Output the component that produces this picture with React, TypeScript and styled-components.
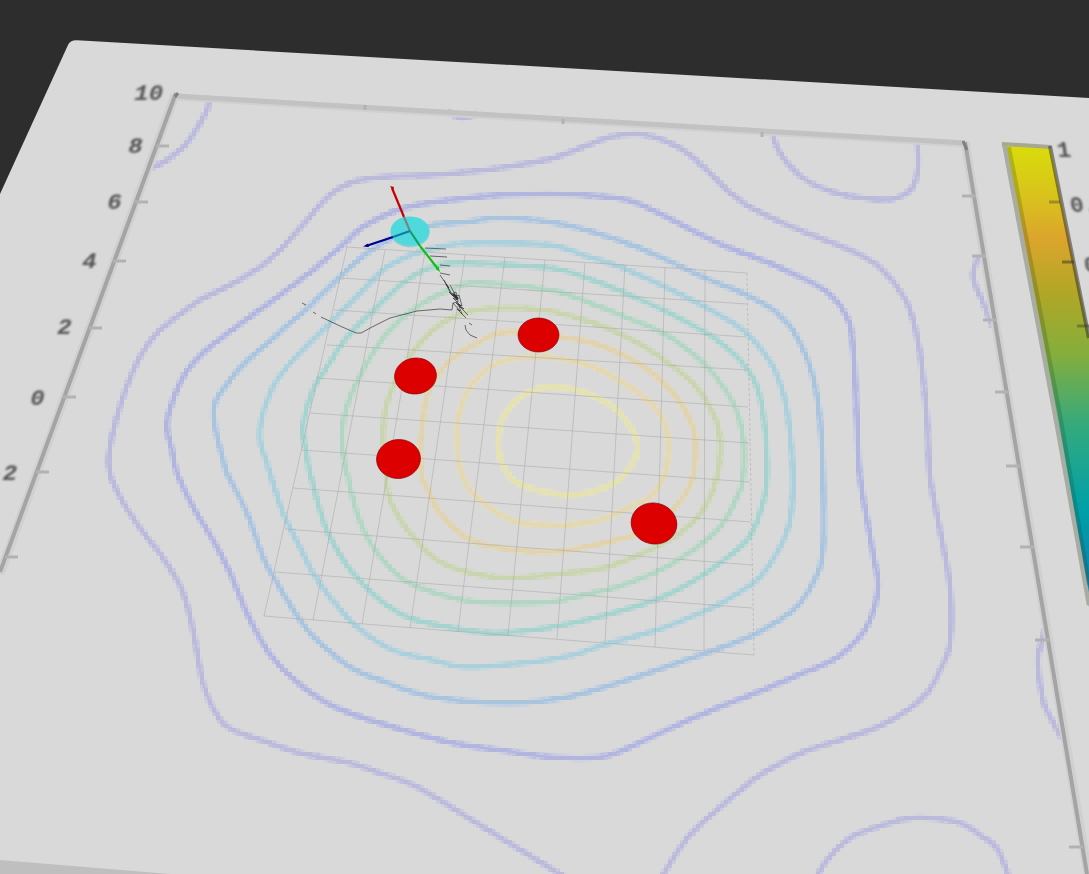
import React from "react";
import styled, { createGlobalStyle } from "styled-components";

type Pt = [number, number];

const GlobalStyle = createGlobalStyle`
  html, body { margin: 0; padding: 0; background: #2d2d2d; }
`;

const Viewport = styled.main`
  width: 1089px;
  height: 874px;
  overflow: hidden;
  background: #2d2d2d;
`;

const SceneSvg = styled.svg`
  display: block;
  width: 1089px;
  height: 874px;
`;

const Plate = styled.path`
  fill: #d9d9d9;
`;

const BottomBand = styled.polygon`
  fill: #bfbfbf;
`;

const AxisGlow = styled.polyline<{ $w?: number }>`
  fill: none;
  stroke: #d0d0d0;
  stroke-width: ${(p) => p.$w ?? 9}px;
`;

const AxisLine = styled.polyline<{ $c?: string; $w?: number }>`
  fill: none;
  stroke: ${(p) => p.$c ?? "#a4a4a4"};
  stroke-width: ${(p) => p.$w ?? 4}px;
`;

const Tick = styled.line<{ $c?: string }>`
  stroke: ${(p) => p.$c ?? "#b2b2b2"};
  stroke-width: 3px;
  filter: url(#tickSoft);
`;

const AxisLabel = styled.text`
  font-family: "Liberation Mono", monospace;
  font-weight: 700;
  font-size: 24px;
  fill: #555;
  filter: url(#soft);
`;

const ContourLayer = styled.g`
  filter: url(#pixelate);
  opacity: 0.8;
`;

const Contour = styled.path<{ $c: string; $w?: number }>`
  fill: none;
  stroke: ${(p) => p.$c};
  stroke-width: ${(p) => p.$w ?? 4.6}px;
  stroke-linejoin: round;
`;

const GridLine = styled.line<{ $dash?: boolean }>`
  stroke: #a8a8a8;
  stroke-width: 0.9px;
  opacity: 0.6;
  stroke-dasharray: ${(p) => (p.$dash ? "3 2" : "none")};
`;

const Disc = styled.ellipse`
  fill: #dc0000;
  stroke: #7a0000;
  stroke-width: 0.6px;
`;

const RobotBase = styled.ellipse`
  fill: #90cfd0;
`;

const RobotTop = styled.ellipse`
  fill: #50d9dc;
`;

const Arrow = styled.line<{ $c: string; $w?: number }>`
  stroke: ${(p) => p.$c};
  stroke-width: ${(p) => p.$w ?? 2.2}px;
`;

const ArrowHead = styled.polygon<{ $c: string }>`
  fill: ${(p) => p.$c};
`;

const Trace = styled.polyline<{ $w?: number }>`
  fill: none;
  stroke: #2a2a2a;
  stroke-width: ${(p) => p.$w ?? 0.65}px;
`;

function spline(pts: Pt[], closed: boolean): string {
  const n = pts.length;
  const at = (i: number): Pt =>
    closed ? pts[(i + n) % n] : pts[Math.max(0, Math.min(n - 1, i))];
  let d = `M${pts[0][0]} ${pts[0][1]}`;
  const last = closed ? n : n - 1;
  for (let i = 0; i < last; i++) {
    const p0 = at(i - 1), p1 = at(i), p2 = at(i + 1), p3 = at(i + 2);
    const c1x = p1[0] + (p2[0] - p0[0]) / 6, c1y = p1[1] + (p2[1] - p0[1]) / 6;
    const c2x = p2[0] - (p3[0] - p1[0]) / 6, c2y = p2[1] - (p3[1] - p1[1]) / 6;
    d += `C${c1x.toFixed(1)} ${c1y.toFixed(1)} ${c2x.toFixed(1)} ${c2y.toFixed(1)} ${p2[0]} ${p2[1]}`;
  }
  return d + (closed ? "Z" : "");
}

const outer: Pt[] = [[570,880],[545,865],[480,825],[417,787],[377,772],[350,763],[300,753],[267,742],[233,730],[217,715],[203,683],[193,630],[182,590],[163,558],[140,528],[120,497],[110,473],[110,447],[123,397],[140,357],[157,333],[170,322],[200,300],[230,285],[260,267],[283,247],[307,220],[330,195],[353,182],[383,177],[433,175],[467,172],[500,168],[550,159],[583,147],[610,137],[637,134],[660,139],[683,150],[707,170],[727,190],[750,207],[783,223],[817,237],[850,250],[877,265],[897,287],[910,310],[920,353],[927,420],[930,477],[940,530],[950,587],[950,643],[940,670],[927,693],[903,713],[870,730],[833,742],[803,752],[777,765],[757,777],[743,788],[690,835],[660,880]];

const rings: { c: string; soft: string; pts: Pt[] }[] = [
  { c: "#a9aee0", soft: "#c6c8e4", pts: [[172,450],[167,423],[178,387],[190,367],[210,347],[243,322],[280,295],[313,270],[340,247],[363,227],[390,213],[417,205],[450,200],[500,195],[550,194],[583,195],[627,200],[663,215],[697,233],[730,248],[767,262],[800,277],[827,292],[847,317],[853,347],[857,420],[860,477],[873,553],[878,587],[870,620],[857,640],[833,660],[803,673],[763,690],[717,708],[673,727],[630,747],[600,757],[550,757],[500,750],[453,743],[393,727],[347,712],[317,697],[287,673],[267,650],[247,613],[230,573],[213,540],[193,507],[177,473]] },
  { c: "#a0c0e0", soft: "#c3d2e2", pts: [[225,467],[215,427],[215,403],[228,383],[243,365],[280,332],[313,303],[340,277],[367,253],[400,235],[433,225],[467,222],[500,218],[550,222],[593,232],[637,247],[673,263],[710,280],[747,295],[777,313],[797,337],[813,377],[820,420],[823,477],[823,550],[813,583],[793,610],[757,633],[723,647],[677,663],[627,680],[567,697],[510,703],[433,697],[380,680],[350,667],[317,640],[300,620],[277,583],[263,557],[247,513],[227,473]] },
  { c: "#a0cedc", soft: "#c4d8de", pts: [[267,463],[260,440],[263,413],[277,380],[300,353],[333,320],[360,293],[387,267],[417,253],[450,245],[483,243],[550,245],[583,255],[623,268],[667,288],[707,308],[743,330],[767,357],[780,383],[788,417],[793,477],[790,520],[780,547],[760,577],[730,598],[700,613],[657,630],[603,645],[573,655],[533,662],[467,667],[433,660],[393,650],[357,627],[330,597],[313,573],[300,547],[283,513],[270,473]] },
  { c: "#9bd2cd", soft: "#c3dad7", pts: [[310,473],[307,457],[303,427],[313,390],[327,367],[347,337],[377,307],[407,280],[433,267],[463,263],[550,268],[587,278],[630,295],[673,315],[717,340],[750,373],[763,413],[767,477],[760,513],[747,540],[720,563],[690,583],[660,598],[617,612],[573,623],[533,630],[493,633],[453,628],[410,618],[380,600],[353,573],[333,543],[323,520]] },
  { c: "#aad6bf", soft: "#c9dccf", pts: [[345,467],[342,433],[348,403],[363,370],[387,333],[417,307],[450,290],[477,283],[550,290],[590,303],[633,320],[670,337],[707,367],[733,403],[743,437],[743,477],[737,497],[720,527],[693,550],[660,570],[617,587],[583,595],[550,602],[500,603],[463,600],[427,590],[400,577],[373,547],[357,513],[347,473]] },
  { c: "#c6d4a6", soft: "#d3dbc4", pts: [[385,465],[383,433],[387,403],[400,373],[420,343],[447,320],[477,310],[510,308],[550,311],[590,322],[627,337],[660,357],[693,383],[713,413],[720,440],[717,477],[703,510],[680,533],[650,550],[607,567],[567,573],[507,578],[460,570],[433,557],[410,533],[393,507],[387,487]] },
  { c: "#e2d2a4", soft: "#e0dac4", pts: [[420,450],[423,420],[428,393],[447,363],[477,343],[507,332],[560,337],[593,343],[627,357],[657,377],[683,407],[695,437],[693,477],[683,497],[665,517],[640,533],[590,546],[550,552],[500,548],[467,538],[440,513],[428,490],[422,477]] },
  { c: "#e6d8a8", soft: "#e2ddc6", pts: [[458,457],[458,420],[470,387],[497,363],[530,357],[550,357],[593,367],[630,387],[657,410],[668,437],[665,473],[650,497],[623,510],[600,520],[567,525],[550,525],[517,522],[490,508],[473,493],[463,477]] },
  { c: "#e8e5a8", soft: "#e2e1c4", pts: [[499,453],[500,427],[510,407],[527,393],[550,387],[583,392],[613,407],[631,428],[638,447],[632,464],[616,482],[587,493],[567,495],[550,493],[527,487],[510,477]] },
];

const corners: Pt[][] = [
  [[210,97],[207,110],[200,123],[187,143],[167,160],[150,168]],
  [[448,112],[462,118],[478,113]],
  [[772,132],[780,153],[803,178],[833,192],[863,198],[893,199],[912,188],[918,167],[917,140]],
  [[978,257],[973,277],[982,300],[993,327]],
  [[1045,630],[1038,660],[1043,700],[1050,717],[1062,738]],
  [[815,880],[827,860],[850,838],[877,827],[913,818],[957,822],[983,837],[998,850],[1010,880]],
];

const gridTop = [347,385,425,465,505,545,585,625,665,705,747];
const gridBottom = [264,313,362,410,458,508,557,605,655,704,754];
const gridTopY = [247,250,252,255,257,260,263,265,267,270,273];
const gridBottomY = [616,620,624,628,631,635,639,643,647,651,655];
const gridLeftX = [347,341,334,327,318,310,302,293,285,275,264];
const gridLeftY = [247,278,310,345,378,413,450,488,529,572,616];
const gridRightX = [747,747,747,748,748,749,750,751,752,752,754];
const gridRightY = [273,304,337,370,407,443,482,522,565,608,655];

const leftTicks: Pt[] = [[156,146],[135,202],[113,261],[89,328],[63,397],[36,472],[5,557]];
const topTicks: Pt[] = [[365,105],[563,119],[762,132]];
const rightTicks: Pt[] = [[969,196],[979,256],[990,320],[1002,392],[1013,466],[1027,547],[1042,640],[1076,847]];

const leftLabels: { t: string; x: number; y: number }[] = [
  { t: "10", x: 133, y: 100 },
  { t: "8", x: 127, y: 153 },
  { t: "6", x: 106, y: 209 },
  { t: "4", x: 81, y: 268 },
  { t: "2", x: 56, y: 334 },
  { t: "0", x: 29, y: 405 },
  { t: "-2", x: -13, y: 480 },
];

const barLabels: { t: string; x: number; y: number }[] = [
  { t: "1", x: 1058, y: 157 },
  { t: "0.8", x: 1071, y: 212 },
  { t: "0.6", x: 1085, y: 272 },
];

export default function App() {
  const outerD = spline(outer, false);
  return (
    <Viewport>
      <GlobalStyle />
      <SceneSvg viewBox="0 0 1089 874" role="img" aria-label="Contour map with robot and obstacles">
        <defs>
          <filter id="soft" x="-30%" y="-30%" width="160%" height="160%">
            <feGaussianBlur stdDeviation="1.15" />
          </filter>
          <filter id="tickSoft" filterUnits="userSpaceOnUse" x="0" y="0" width="1089" height="874">
            <feGaussianBlur stdDeviation="0.6" />
          </filter>
          <filter id="pixelate" filterUnits="userSpaceOnUse" x="0" y="0" width="1089" height="874">
            <feFlood x="1" y="1" width="2" height="2" floodColor="#000" />
            <feComposite x="0" y="0" width="4" height="4" />
            <feTile result="grid" />
            <feComposite in="SourceGraphic" in2="grid" operator="in" />
            <feMorphology operator="dilate" radius="1" />
            <feGaussianBlur stdDeviation="0.45" />
          </filter>
          <linearGradient id="barFill" gradientUnits="userSpaceOnUse" x1="0" y1="145" x2="0" y2="610">
            <stop offset="0" stopColor="#d9dc0a" />
            <stop offset="0.11" stopColor="#d8c31c" />
            <stop offset="0.2" stopColor="#dca52c" />
            <stop offset="0.32" stopColor="#b0a726" />
            <stop offset="0.45" stopColor="#84ae3c" />
            <stop offset="0.6" stopColor="#35aa7c" />
            <stop offset="0.78" stopColor="#00a0a8" />
            <stop offset="1" stopColor="#1478ae" />
          </linearGradient>
        </defs>

        <Plate d="M77 40.3 L1089 98 L1089 874 L0 874 L0 194 L68 45 Q70 40 77 40.3 Z" />
        <BottomBand points="0,860 170,874 0,874" />

        <ContourLayer>
          {corners.map((pts, i) => (
            <Contour key={`s${i}`} d={spline(pts, false)} $c="#cacae2" $w={6.5} />
          ))}
          <Contour d={outerD} $c="#cacae2" $w={6.5} />
          {rings.map((r) => (
            <Contour key={`s${r.c}`} d={spline(r.pts, true)} $c={r.soft} $w={6.5} />
          ))}
          {corners.map((pts, i) => (
            <Contour key={`c${i}`} d={spline(pts, false)} $c="#b4b3dc" />
          ))}
          <Contour d={outerD} $c="#b4b3dc" />
          {rings.map((r) => (
            <Contour key={r.c} d={spline(r.pts, true)} $c={r.c} />
          ))}
        </ContourLayer>

        {gridTop.map((x, i) => (
          <GridLine key={`v${i}`} x1={x} y1={gridTopY[i]} x2={gridBottom[i]} y2={gridBottomY[i]} $dash={i === 10} />
        ))}
        {gridLeftX.map((x, i) => (
          <GridLine key={`h${i}`} x1={x} y1={gridLeftY[i]} x2={gridRightX[i]} y2={gridRightY[i]} />
        ))}

        <AxisGlow points="175,97 965,144" $w={7} />
        <AxisGlow points="175,95 0,574" />
        <AxisGlow points="965,142 1089,880" />
        <AxisLine points="175,96 965,143" $c="#c2c2c2" $w={5} />
        <AxisLine points="176,93 0,572" />
        <AxisLine points="965,142 1087,874" />
        <AxisLine points="175,97 178,93" $c="#808080" $w={3} />
        <AxisLine points="963,141 967,150" $c="#808080" $w={3} />

        {leftTicks.map(([x, y]) => (
          <Tick key={x} x1={x} y1={y} x2={x + 13} y2={y} />
        ))}
        {topTicks.map(([x, y]) => (
          <Tick key={x} x1={x} y1={y} x2={x} y2={y + 5} />
        ))}
        {rightTicks.map(([x, y]) => (
          <Tick key={x} x1={x - 7} y1={y} x2={x + 7} y2={y} />
        ))}

        {leftLabels.map((l) => (
          <AxisLabel key={l.x} transform={`translate(${l.x} ${l.y}) skewX(-12) scale(1 0.9)`}>
            {l.t}
          </AxisLabel>
        ))}

        <polygon points="1003,143 1050,146 1089,335 1089,607" fill="url(#barFill)" />
        <AxisLine points="1004,143 1056,420 1089,605" $c="#a9aca2" $w={4.5} />
        <AxisLine points="1009,147 1061,420 1089,585" $c="rgba(30,60,30,0.22)" $w={4} />
        <AxisLine points="1002,144 1051,147" $c="#a8a890" $w={4} />
        <AxisLine points="1050,146 1089,338" $c="rgba(40,40,40,0.5)" $w={4} />
        <Tick x1={1049} y1={202} x2={1060} y2={202} $c="rgba(50,50,40,0.35)" />
        <Tick x1={1062} y1={262} x2={1074} y2={262} $c="rgba(50,50,40,0.5)" />
        <Tick x1={1077} y1={326} x2={1089} y2={326} $c="rgba(50,50,40,0.4)" />
        {barLabels.map((l) => (
          <AxisLabel key={l.x} transform={`translate(${l.x} ${l.y}) skewX(8) scale(0.95 0.9)`}>
            {l.t}
          </AxisLabel>
        ))}

        <Disc cx={538.5} cy={335} rx={20.5} ry={17} />
        <Disc cx={415.5} cy={376} rx={21} ry={18} transform="rotate(-6 415.5 376)" />
        <Disc cx={398.5} cy={459} rx={22} ry={19.5} transform="rotate(-6 398.5 459)" />
        <Disc cx={654} cy={523.5} rx={23} ry={20.5} transform="rotate(12 654 523.5)" />

        <Trace points="302,303 306,305" />
        <Trace points="313,312 316,314" />
        <Trace points="321,317 340,326 356,333 361,333 372,327 390,318 417,311 440,309 452,310 453,303" />
        <Trace points="425,248 446,249" />
        <Trace points="430,256 447,257" />
        <Trace points="440,265 450,266" />
        <Trace points="440,273 450,275" />
        <Trace points="440,275 449,288 446,284 453,296 449,292 457,300 453,298 461,306 456,303 464,309 459,306 468,315" />
        <Trace points="444,280 451,294 456,292 458,302 453,303 460,311 457,309 466,318" />
        <Trace points="450,285 456,296 459,295 462,306 458,304 462,314" />
        <Trace points="453,294 458,299" $w={2.2} />
        <Trace points="465,325 466,330 470,335 477,338" />
        <Trace points="469,323 472,325" />

        <RobotBase cx={410} cy={232.5} rx={19.5} ry={15} />
        <RobotTop cx={410} cy={231} rx={19.5} ry={14.5} />
        <Arrow x1={392} y1={188} x2={404} y2={217} $c="#c40000" />
        <Arrow x1={404} y1={217} x2={410} y2={231} $c="#6f8a8b" />
        <Arrow x1={366} y1={246} x2={393} y2={237} $c="#00008c" />
        <Arrow x1={393} y1={237} x2={410} y2={231} $c="#1676a8" />
        <Arrow x1={410} y1={231} x2={420} y2={246} $c="#12a060" />
        <Arrow x1={420} y1={246} x2={438} y2={269} $c="#12c012" />
        <ArrowHead points="390,186 394,187 393,191" $c="#c40000" />
        <ArrowHead points="363,246.5 368,243.5 369,247" $c="#00008c" />
        <ArrowHead points="440,272 435.5,269 438.5,266.5" $c="#12c012" />
      </SceneSvg>
    </Viewport>
  );
}
